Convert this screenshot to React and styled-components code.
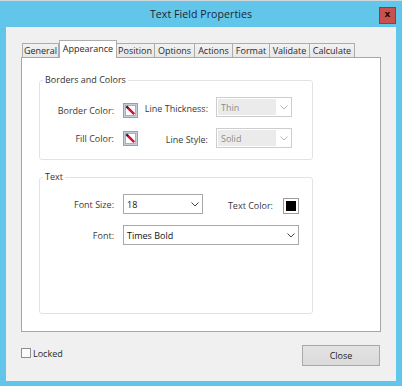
import React from "react";
import styled, { createGlobalStyle, css } from "styled-components";

const Global = createGlobalStyle`
  html, body { margin: 0; padding: 0; background: #62c6ea; }
  * { box-sizing: border-box; }
  body { font-family: "Open Sans", "Noto Sans", sans-serif; }
`;

const Window = styled.div`
  width: 402px;
  height: 386px;
  background: #62c6ea;
  border-top: 1px solid #cfd8dc;
  display: flex;
  flex-direction: column;
`;

const TitleBar = styled.div`
  height: 26px;
  display: grid;
  grid-template-columns: 1fr auto 1fr;
  align-items: center;
`;

const Title = styled.div`
  grid-column: 2;
  font-size: 10.6px;
  color: #1a2733;
  letter-spacing: 0.05px;
`;

const CloseX = styled.div`
  grid-column: 3;
  justify-self: end;
  margin-right: 6px;
  margin-top: 2px;
  width: 17px;
  height: 17px;
  background: #c9514b;
  border: 1px solid #9b3a35;
  display: flex;
  align-items: center;
  justify-content: center;
  font-family: "DejaVu Sans", sans-serif;
  font-weight: bold;
  font-size: 9px;
  line-height: 1;
  color: #1a0c0c;
  padding-bottom: 1px;
`;

const Client = styled.div`
  flex: 1;
  margin: 0 6px 5px 6px;
  background: #f0f0f0;
  padding: 13px 15px 15px 15px;
  display: flex;
  flex-direction: column;
`;

const TabStrip = styled.div`
  height: 17px;
  display: flex;
  align-items: flex-start;
  padding-left: 2px;
`;

const Tab = styled.div`
  width: ${(p) => p.$w}px;
  margin-top: 3px;
  height: 14px;
  border: 1px solid #acacac;
  border-bottom: none;
  margin-left: -1px;
  background: linear-gradient(#f2f2f2, #e8e8e8);
  font-size: 9px;
  color: #2a2a2a;
  display: flex;
  align-items: center;
  justify-content: center;
  line-height: 1;
  ${(p) =>
    p.$active &&
    css`
      margin-top: 0;
      height: 18px;
      background: #ffffff;
      position: relative;
      z-index: 2;
      align-items: flex-start;
      padding-top: 3px;
      margin-left: 0;
      margin-right: -1px;
    `}
`;

const Panel = styled.div`
  height: 275px;
  background: #ffffff;
  border: 1px solid #a6a6a6;
  padding: 16px 17px 17px 17px;
  display: flex;
  flex-direction: column;
  gap: 11px;
`;

const Group = styled.fieldset`
  width: 274px;
  margin: 0;
  padding: 11px 0 11px 0;
  min-width: 0;
  border: 1px solid #e3e3e3;
  border-radius: 3px;
  ${(p) => p.$grow && css`flex: 1;`}
`;

const Legend = styled.legend`
  font-size: 9px;
  line-height: 12px;
  height: 12px;
  color: #333;
  padding: 0 2px;
  margin-left: 3px;
`;

const Grid = styled.div`
  display: grid;
  grid-template-columns: ${(p) => p.$cols};
  grid-auto-rows: 20px;
  row-gap: 11px;
  align-items: center;
`;

const Label = styled.div`
  font-size: 9px;
  color: #3a3a3a;
  text-align: right;
  padding-right: ${(p) => p.$pr ?? 9}px;
  white-space: nowrap;
  ${(p) => p.$drop && css`margin-top: ${p.$drop}px;`}
`;

const Cell = styled.div`
  display: flex;
  align-items: center;
  ${(p) => p.$drop && css`margin-top: ${p.$drop}px;`}
`;

const SelectBox = styled.div`
  width: ${(p) => p.$w}px;
  height: 20px;
  display: flex;
  align-items: stretch;
  border: 1px solid ${(p) => (p.$disabled ? "#cdcdcd" : "#a9a9a9")};
  background: #ffffff;
`;

const SelectText = styled.div`
  flex: 1;
  display: flex;
  align-items: center;
  padding-left: 3px;
  font-size: 9px;
  color: ${(p) => (p.$disabled ? "#8d8d8d" : "#111")};
  background: ${(p) => (p.$disabled ? "#ebebeb" : "#fff")};
  margin: ${(p) => (p.$disabled ? "1px 0 1px 1px" : "0")};
`;

const Chevron = styled.div`
  width: 15px;
  display: flex;
  align-items: center;
  justify-content: center;
`;

const Row = styled.div`
  display: flex;
  align-items: center;
`;

const TextColorLabel = styled.div`
  margin-left: auto;
  margin-right: 10px;
  font-size: 9px;
  color: #3a3a3a;
  margin-top: 2px;
`;

const ColorWell = styled.div`
  width: 16px;
  height: 16px;
  border: 1px solid #9c9c9c;
  padding: 2px;
  background: #fff;
  margin-top: 3px;
`;

const ColorFill = styled.div`
  width: 100%;
  height: 100%;
  background: ${(p) => p.$color};
`;

const Footer = styled.div`
  margin-top: 13px;
  display: flex;
  align-items: center;
  justify-content: space-between;
  padding-right: 1px;
`;

const CheckLabel = styled.label`
  display: flex;
  align-items: center;
  gap: 2px;
  font-size: 9px;
  color: #2a2a2a;
  margin-bottom: 5px;
`;

const CheckBox = styled.span`
  width: 10px;
  height: 10px;
  border: 1px solid #8f8f8f;
  background: #fbfbfb;
`;

const Button = styled.button`
  width: 78px;
  height: 21px;
  border: 1px solid #a9a9a9;
  background: linear-gradient(#e3e3e3, #dadada);
  font-family: "Open Sans", "Noto Sans", sans-serif;
  font-size: 9px;
  color: #1e1e1e;
  padding: 0;
`;

function ChevronIcon({ disabled }) {
  return (
    <svg width="8" height="5" viewBox="0 0 8 5">
      <polyline
        points="0.5,0.5 4,4 7.5,0.5"
        fill="none"
        stroke={disabled ? "#b5b5b5" : "#444"}
        strokeWidth="1"
      />
    </svg>
  );
}

function Select({ w, value, disabled }) {
  return (
    <SelectBox $w={w} $disabled={disabled}>
      <SelectText $disabled={disabled}>{value}</SelectText>
      <Chevron>
        <ChevronIcon disabled={disabled} />
      </Chevron>
    </SelectBox>
  );
}

function NoColorSwatch() {
  return (
    <svg width="15" height="15" viewBox="0 0 15 15">
      <rect x="0.5" y="0.5" width="14" height="14" fill="#c5cfd9" stroke="#93a2b3" />
      <rect x="2.5" y="2.5" width="10" height="10" fill="#ffffff" stroke="#7f8ea0" strokeWidth="0.6" />
      <line x1="4.6" y1="4.6" x2="11.2" y2="11.2" stroke="#cc1130" strokeWidth="2.4" />
      <line x1="3.4" y1="3.4" x2="5" y2="5" stroke="#1d1d3d" strokeWidth="2.4" />
    </svg>
  );
}

const tabs = [
  ["General", 37],
  ["Appearance", 58],
  ["Position", 40],
  ["Options", 41],
  ["Actions", 39],
  ["Format", 38],
  ["Validate", 41],
  ["Calculate", 46],
];

export default function App() {
  return (
    <>
      <Global />
      <Window>
        <TitleBar>
          <Title>Text Field Properties</Title>
          <CloseX>x</CloseX>
        </TitleBar>
        <Client>
          <TabStrip>
            {tabs.map(([t, w]) => (
              <Tab key={t} $w={w} $active={t === "Appearance"}>
                {t}
              </Tab>
            ))}
          </TabStrip>
          <Panel>
            <Group>
              <Legend>Borders and Colors</Legend>
              <Grid $cols="83px 16px 77px 76px">
                <Label $drop={6}>Border Color:</Label>
                <Cell $drop={6}>
                  <NoColorSwatch />
                </Cell>
                <Label $pr={8} $drop={2}>Line Thickness:</Label>
                <Select w={76} value="Thin" disabled />
                <Label>Fill Color:</Label>
                <Cell>
                  <NoColorSwatch />
                </Cell>
                <Label $pr={8} $drop={2}>Line Style:</Label>
                <Select w={76} value="Solid" disabled />
              </Grid>
            </Group>
            <Group $grow>
              <Legend>Text</Legend>
              <Grid $cols="83px 176px">
                <Label $drop={1}>Font Size:</Label>
                <Row>
                  <Select w={80} value="18" />
                  <TextColorLabel>Text Color:</TextColorLabel>
                  <ColorWell>
                    <ColorFill $color="#000" />
                  </ColorWell>
                </Row>
                <Label $drop={1}>Font:</Label>
                <Select w={176} value="Times Bold" />
              </Grid>
            </Group>
          </Panel>
          <Footer>
            <CheckLabel>
              <CheckBox />
              Locked
            </CheckLabel>
            <Button>Close</Button>
          </Footer>
        </Client>
      </Window>
    </>
  );
}
